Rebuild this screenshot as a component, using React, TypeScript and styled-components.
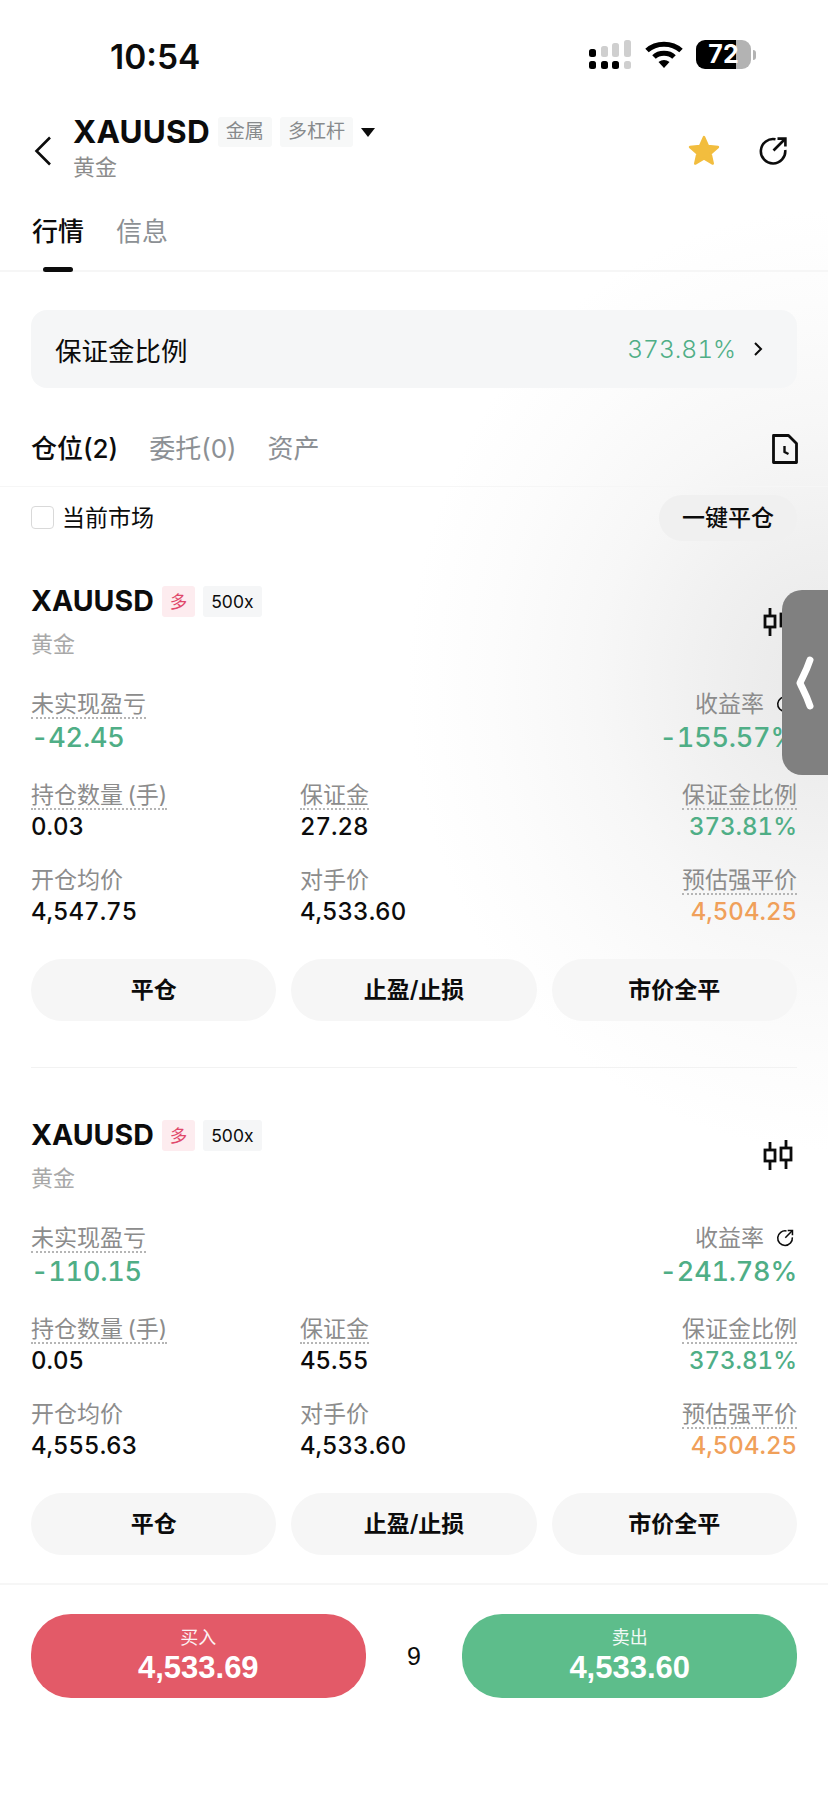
import React from "react";
import styled, { createGlobalStyle } from "styled-components";

const GlobalStyle = createGlobalStyle`
  html, body {
    margin: 0;
    padding: 0;
    background: #fff;
  }
  * {
    box-sizing: border-box;
  }
`;

const Page = styled.div`
  position: relative;
  width: 828px;
  height: 1795px;
  overflow: hidden;
  color: #0c0c0c;
  font-family: Inter, "Noto Sans CJK SC", sans-serif;
  background:
    radial-gradient(ellipse 420px 470px at 100% 680px, #e8e8e8 0%, #f0f0f0 30%, #f7f7f7 55%, #fcfcfc 80%, rgba(255, 255, 255, 0) 100%),
    #fff;
`;

const StatusBar = styled.div`
  height: 100px;
  padding: 37px 72px 0 110px;
  display: flex;
  justify-content: space-between;
  align-items: flex-start;
`;

const Time = styled.div`
  font-size: 33.5px;
  line-height: 40px;
  font-weight: 600;
`;

const StatusIcons = styled.div`
  display: flex;
  align-items: center;
  gap: 13px;
  padding-top: 3px;
`;

const Battery = styled.div`
  position: relative;
  width: 55px;
  height: 29px;
  border-radius: 9px;
  overflow: hidden;
  background: linear-gradient(90deg, #000 0 72%, #b3b3b3 72% 100%);
  color: #fff;
  font-size: 25px;
  line-height: 29px;
  font-weight: 700;
  text-align: center;
`;

const BatteryWrap = styled.div`
  display: flex;
  align-items: center;
  gap: 2px;
`;

const BatteryNub = styled.div`
  width: 3px;
  height: 10px;
  border-radius: 0 3px 3px 0;
  background: #b3b3b3;
`;

const Header = styled.div`
  height: 105px;
  padding: 0 40px 0 34px;
  display: flex;
  align-items: flex-start;
`;

const BackButton = styled.div`
  width: 39px;
  padding-top: 36px;
  display: flex;
`;

const HeaderText = styled.div`
  flex: 1;
  padding-top: 13px;
`;

const TitleRow = styled.div`
  display: flex;
  align-items: center;
  height: 38px;
`;

const HeaderTitle = styled.div`
  font-size: 31.5px;
  line-height: 38px;
  font-weight: 700;
  letter-spacing: 0.2px;
`;

const HeaderTag = styled.div`
  height: 30px;
  padding: 0 8px;
  margin-left: 8px;
  background: #f7f8f8;
  border-radius: 3px;
  color: #878a8c;
  font-size: 19px;
  line-height: 30px;
`;

const Caret = styled.div`
  width: 0;
  height: 0;
  margin-left: 8px;
  border-left: 7px solid transparent;
  border-right: 7px solid transparent;
  border-top: 9px solid #0c0c0c;
`;

const HeaderSub = styled.div`
  margin-top: 1px;
  font-size: 22px;
  line-height: 30px;
  color: #8c8c8c;
`;

const HeaderActions = styled.div`
  display: flex;
  align-items: center;
  gap: 38px;
  padding-top: 35px;
`;

const MainTabs = styled.div`
  height: 67px;
  padding: 12px 32px 0;
  display: flex;
  gap: 32px;
  border-bottom: 2px solid #f6f6f6;
`;

const MainTab = styled.div<{ $active?: boolean }>`
  position: relative;
  font-size: 26px;
  line-height: 30px;
  height: 55px;
  color: ${(p) => (p.$active ? "#0c0c0c" : "#8c9094")};
  font-weight: ${(p) => (p.$active ? 500 : 400)};

  &::after {
    content: "";
    display: ${(p) => (p.$active ? "block" : "none")};
    position: absolute;
    left: 11px;
    bottom: 0;
    width: 30px;
    height: 5px;
    border-radius: 3px;
    background: #0c0c0c;
  }
`;

const RatioBar = styled.div`
  margin: 38px 31px 0;
  height: 78px;
  padding: 0 34px 0 24px;
  display: flex;
  align-items: center;
  justify-content: space-between;
  background: #f5f6f7;
  border-radius: 16px;
  font-size: 26.5px;
`;

const RatioValue = styled.div`
  display: flex;
  align-items: center;
  gap: 17px;
  color: #4fae86;
  font-size: 24.5px;
  font-weight: 300;
  font-variant-numeric: tabular-nums;
`;

const PositionTabs = styled.div`
  height: 99px;
  padding: 24px 30px 0 31px;
  display: flex;
  align-items: center;
  justify-content: space-between;
  border-bottom: 1px solid #f6f6f6;
`;

const PositionTabList = styled.div`
  display: flex;
  gap: 31px;
`;

const PositionTab = styled.div<{ $active?: boolean }>`
  font-size: 26px;
  line-height: 30px;
  color: ${(p) => (p.$active ? "#0c0c0c" : "#8c9094")};
  font-weight: ${(p) => (p.$active ? 500 : 400)};
`;

const FilterRow = styled.div`
  height: 54px;
  padding: 7px 31px 0;
  display: flex;
  align-items: center;
  justify-content: space-between;
`;

const FilterLabel = styled.label`
  display: flex;
  align-items: center;
  gap: 8px;
  font-size: 23px;
  line-height: 24px;
`;

const CheckBox = styled.span`
  width: 23px;
  height: 23px;
  border: 1.5px solid #d9d9d9;
  border-radius: 4px;
  background: #fff;
`;

const PillButton = styled.div`
  width: 138px;
  height: 46px;
  border-radius: 23px;
  background: #f0f0f0;
  font-size: 23px;
  line-height: 46px;
  font-weight: 500;
  text-align: center;
`;

const Card = styled.div<{ $last?: boolean }>`
  padding: 42px 31px 0;
  height: ${(p) => (p.$last ? 508 : 534)}px;
  position: relative;
`;

const CardDivider = styled.div`
  height: 1px;
  margin: 46px 0 0;
  background: #f2f2f2;
`;

const CardHead = styled.div`
  display: flex;
  align-items: center;
  justify-content: space-between;
  height: 36px;
`;

const CardTitleGroup = styled.div`
  display: flex;
  align-items: center;
`;

const CardTitle = styled.div`
  font-size: 28.5px;
  line-height: 36px;
  font-weight: 700;
  margin-right: 8px;
`;

const SideTag = styled.div<{ $long?: boolean }>`
  height: 31px;
  padding: 0 8px;
  margin-right: 8px;
  border-radius: 3px;
  font-size: 17.5px;
  line-height: 31px;
  background: ${(p) => (p.$long ? "#fdecef" : "#f5f6f7")};
  color: ${(p) => (p.$long ? "#e0476a" : "#0c0c0c")};
`;

const CardIcon = styled.div`
  display: flex;
  margin: 40px 4px 0 0;
`;

const CardSub = styled.div`
  margin-top: 10px;
  height: 30px;
  font-size: 22px;
  line-height: 30px;
  color: #a8a8a8;
`;

const MetricGrid = styled.div`
  margin-top: 32px;
  display: grid;
  grid-template-columns: 269px 1fr 1fr;
  grid-template-rows: 91px 85px 70px;
`;

const Metric = styled.div<{ $right?: boolean }>`
  display: flex;
  flex-direction: column;
  align-items: ${(p) => (p.$right ? "flex-end" : "flex-start")};
`;

const MetricLabel = styled.div<{ $dotted?: boolean }>`
  display: flex;
  align-items: center;
  gap: 12px;
  height: 28px;
  font-size: 23px;
  line-height: 26px;
  word-spacing: -2px;
  color: #8c8c8c;
  border-bottom: 2px dotted ${(p) => (p.$dotted ? "#b5b5b5" : "transparent")};
`;

const RateIcon = styled.span`
  display: flex;
  margin-right: 3px;
`;

const MetricValue = styled.div<{ $tone?: "green" | "orange"; $big?: boolean }>`
  font-size: ${(p) => (p.$big ? 27 : 24)}px;
  line-height: ${(p) => (p.$big ? 36 : 32)}px;
  margin-top: 1px;
  font-weight: 500;
  letter-spacing: ${(p) => (p.$big ? "-0.2px" : "0")};
  font-variant-numeric: tabular-nums;
  color: ${(p) => (p.$tone === "green" ? "#4fae86" : p.$tone === "orange" ? "#f0a05a" : "#0c0c0c")};
`;

const ActionRow = styled.div`
  margin-top: 22px;
  display: grid;
  grid-template-columns: repeat(3, 1fr);
  gap: 15px;
`;

const ActionButton = styled.div`
  height: 62px;
  border-radius: 31px;
  background: #f6f6f6;
  font-size: 23px;
  line-height: 62px;
  font-weight: 600;
  text-align: center;
`;

const Footer = styled.div`
  height: 212px;
  padding: 29px 31px 0;
  border-top: 2px solid #f6f6f6;
  display: flex;
  align-items: flex-start;
`;

const TradeButton = styled.div<{ $side: "buy" | "sell" }>`
  width: 335px;
  height: 84px;
  border-radius: 40px;
  background: ${(p) => (p.$side === "buy" ? "#e35a68" : "#5dbd8b")};
  color: #fff;
  text-align: center;
  padding-top: 11px;
`;

const TradeLabel = styled.div`
  font-size: 18px;
  line-height: 26px;
  opacity: 0.92;
`;

const TradePrice = styled.div`
  font-size: 31px;
  line-height: 34px;
  font-weight: 700;
  font-family: "Liberation Sans", sans-serif;
`;

const Spread = styled.div`
  width: 97px;
  text-align: center;
  font-size: 25px;
  line-height: 84px;
  font-family: "Liberation Sans", sans-serif;
`;

const SideHandle = styled.div`
  position: absolute;
  top: 590px;
  right: 0;
  width: 46px;
  height: 185px;
  background: #808080;
  border-radius: 20px 0 0 20px;
  display: flex;
  align-items: center;
  justify-content: center;
`;

const ShareIcon = ({ size = 30 }: { size?: number }) => (
  <svg width={size} height={size} viewBox="0 0 30 30" fill="none" stroke="#0c0c0c" strokeWidth="2.6">
    <path d="M17.5 3.3 A12.2 12.2 0 1 0 27.2 14" />
    <path d="M15.5 14.5 L27 3" />
    <path d="M19.5 2.6 H27.4 V10.5" />
  </svg>
);

const CandleIcon = () => (
  <svg width="30" height="32" viewBox="0 0 30 32" fill="none" stroke="#0c0c0c" strokeWidth="2.8">
    <path d="M7 3 V11 M7 22 V31" />
    <rect x="2" y="11" width="10" height="11" />
    <path d="M23 1 V9 M23 21 V30" />
    <rect x="18" y="9" width="10" height="12" />
  </svg>
);

const DocClockIcon = () => (
  <svg width="26" height="30" viewBox="0 0 26 30" fill="none" stroke="#0c0c0c" strokeWidth="2.8" strokeLinejoin="round">
    <path d="M1.5 1.5 H16.5 L24.5 9.5 V28.5 H1.5 Z" />
    <path d="M12.5 12 V18 L16.5 20" strokeWidth="2.4" />
  </svg>
);

type PositionData = {
  pnl: string;
  rate: string;
  lots: string;
  margin: string;
  open: string;
};

const positions: PositionData[] = [
  { pnl: "-42.45", rate: "-155.57%", lots: "0.03", margin: "27.28", open: "4,547.75" },
  { pnl: "-110.15", rate: "-241.78%", lots: "0.05", margin: "45.55", open: "4,555.63" },
];

const PositionCard = ({ data, last }: { data: PositionData; last?: boolean }) => (
  <Card $last={last}>
    <CardHead>
      <CardTitleGroup>
        <CardTitle>XAUUSD</CardTitle>
        <SideTag $long>多</SideTag>
        <SideTag>500x</SideTag>
      </CardTitleGroup>
      <CardIcon>
        <CandleIcon />
      </CardIcon>
    </CardHead>
    <CardSub>黄金</CardSub>
    <MetricGrid>
      <Metric>
        <MetricLabel $dotted>未实现盈亏</MetricLabel>
        <MetricValue $big $tone="green">{data.pnl}</MetricValue>
      </Metric>
      <div />
      <Metric $right>
        <MetricLabel>
          收益率
          <RateIcon>
            <ShareIcon size={18} />
          </RateIcon>
        </MetricLabel>
        <MetricValue $big $tone="green">{data.rate}</MetricValue>
      </Metric>
      <Metric>
        <MetricLabel $dotted>持仓数量 (手)</MetricLabel>
        <MetricValue>{data.lots}</MetricValue>
      </Metric>
      <Metric>
        <MetricLabel $dotted>保证金</MetricLabel>
        <MetricValue>{data.margin}</MetricValue>
      </Metric>
      <Metric $right>
        <MetricLabel $dotted>保证金比例</MetricLabel>
        <MetricValue $tone="green">373.81%</MetricValue>
      </Metric>
      <Metric>
        <MetricLabel>开仓均价</MetricLabel>
        <MetricValue>{data.open}</MetricValue>
      </Metric>
      <Metric>
        <MetricLabel>对手价</MetricLabel>
        <MetricValue>4,533.60</MetricValue>
      </Metric>
      <Metric $right>
        <MetricLabel $dotted>预估强平价</MetricLabel>
        <MetricValue $tone="orange">4,504.25</MetricValue>
      </Metric>
    </MetricGrid>
    <ActionRow>
      <ActionButton>平仓</ActionButton>
      <ActionButton>止盈/止损</ActionButton>
      <ActionButton>市价全平</ActionButton>
    </ActionRow>
    {!last && <CardDivider />}
  </Card>
);

export default function App() {
  return (
    <Page>
      <GlobalStyle />
      <StatusBar>
        <Time>10:54</Time>
        <StatusIcons>
          <svg width="43" height="29" viewBox="0 0 43 29">
            <g fill="#000">
              <rect x="0" y="9" width="7" height="8" rx="2.5" />
              <rect x="0" y="21" width="7" height="8" rx="2.5" />
              <rect x="12" y="21" width="7" height="8" rx="2.5" />
              <rect x="23" y="21" width="7" height="8" rx="2.5" />
            </g>
            <g fill="#cfcfcf">
              <rect x="12" y="6" width="7" height="11" rx="2.5" />
              <rect x="23" y="3" width="7" height="14" rx="2.5" />
              <rect x="35" y="0" width="7" height="17" rx="2.5" />
              <rect x="35" y="21" width="7" height="8" rx="2.5" />
            </g>
          </svg>
          <svg width="38" height="28" viewBox="0 0 38 28" fill="none" stroke="#000" strokeWidth="5">
            <path d="M2 9.5 C11 1 27 1 36 9.5" />
            <path d="M9 16 C14 11 24 11 29 16" />
            <path d="M13.5 21 L19 27 L24.5 21 C21 18.2 17 18.2 13.5 21 Z" fill="#000" stroke="none" />
          </svg>
          <BatteryWrap>
            <Battery>72</Battery>
            <BatteryNub />
          </BatteryWrap>
        </StatusIcons>
      </StatusBar>

      <Header>
        <BackButton>
          <svg width="18" height="30" viewBox="0 0 18 30" fill="none" stroke="#0c0c0c" strokeWidth="2.6">
            <path d="M16 1.5 L2.5 15 L16 28.5" />
          </svg>
        </BackButton>
        <HeaderText>
          <TitleRow>
            <HeaderTitle>XAUUSD</HeaderTitle>
            <HeaderTag>金属</HeaderTag>
            <HeaderTag>多杠杆</HeaderTag>
            <Caret />
          </TitleRow>
          <HeaderSub>黄金</HeaderSub>
        </HeaderText>
        <HeaderActions>
          <svg width="32" height="31" viewBox="0 0 32 31">
            <path
              d="M16 2 L20 11 L30 12 L22.6 18.6 L24.8 28.6 L16 23.4 L7.2 28.6 L9.4 18.6 L2 12 L12 11 Z"
              fill="#f2bd3e"
              stroke="#f2bd3e"
              strokeWidth="2.4"
              strokeLinejoin="round"
            />
          </svg>
          <ShareIcon />
        </HeaderActions>
      </Header>

      <MainTabs>
        <MainTab $active>行情</MainTab>
        <MainTab>信息</MainTab>
      </MainTabs>

      <RatioBar>
        保证金比例
        <RatioValue>
          373.81%
          <svg width="10" height="16" viewBox="0 0 10 16" fill="none" stroke="#0c0c0c" strokeWidth="2">
            <path d="M2 2 L8 8 L2 14" />
          </svg>
        </RatioValue>
      </RatioBar>

      <PositionTabs>
        <PositionTabList>
          <PositionTab $active>仓位(2)</PositionTab>
          <PositionTab>委托(0)</PositionTab>
          <PositionTab>资产</PositionTab>
        </PositionTabList>
        <DocClockIcon />
      </PositionTabs>

      <FilterRow>
        <FilterLabel>
          <CheckBox />
          当前市场
        </FilterLabel>
        <PillButton>一键平仓</PillButton>
      </FilterRow>

      <PositionCard data={positions[0]} />
      <PositionCard data={positions[1]} last />

      <Footer>
        <TradeButton $side="buy">
          <TradeLabel>买入</TradeLabel>
          <TradePrice>4,533.69</TradePrice>
        </TradeButton>
        <Spread>9</Spread>
        <TradeButton $side="sell">
          <TradeLabel>卖出</TradeLabel>
          <TradePrice>4,533.60</TradePrice>
        </TradeButton>
      </Footer>

      <SideHandle>
        <svg width="18" height="54" viewBox="0 0 18 54" fill="none" stroke="#fff" strokeWidth="7" strokeLinecap="round" strokeLinejoin="round">
          <path d="M14 4 C10 16 6 22 4 27 C6 32 10 38 14 50" />
        </svg>
      </SideHandle>
    </Page>
  );
}
